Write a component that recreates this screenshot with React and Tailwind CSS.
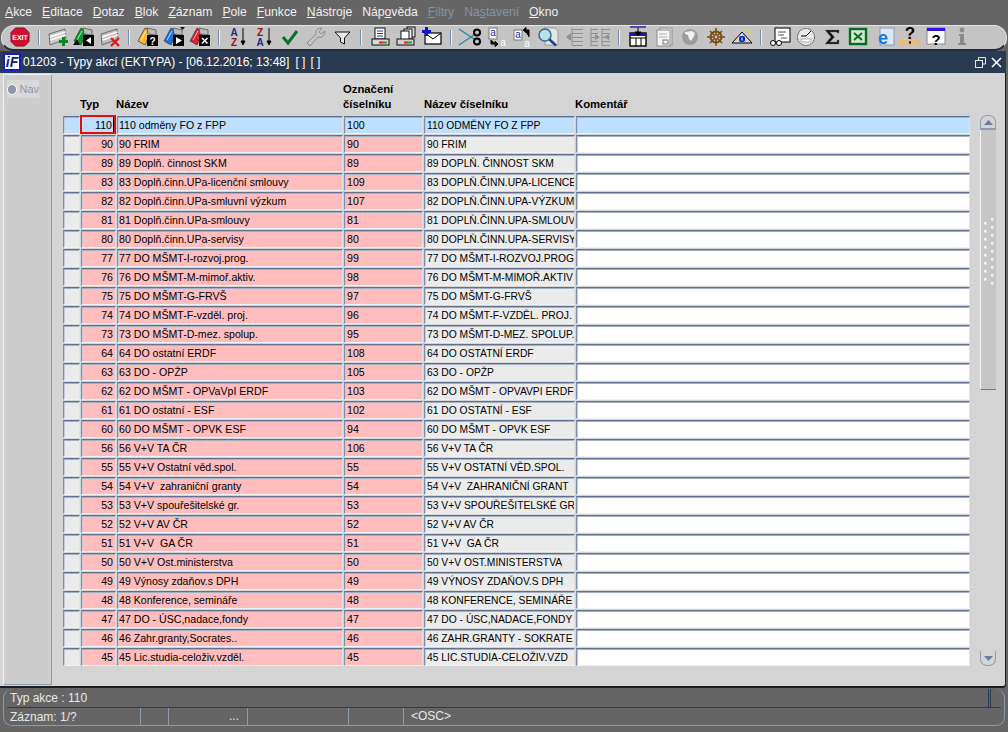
import React from "react";

const rows = [
  ["110","110 odměny FO z FPP","100","110 ODMĚNY FO Z FPP"],
  ["90","90 FRIM","90","90 FRIM"],
  ["89","89 Doplň. činnost SKM","89","89 DOPLŇ. ČINNOST SKM"],
  ["83","83 Doplň.činn.UPa-licenční smlouvy","109","83 DOPLŇ.ČINN.UPA-LICENCE"],
  ["82","82 Doplň.činn.UPa-smluvní výzkum","107","82 DOPLŇ.ČINN.UPA-VÝZKUM"],
  ["81","81 Doplň.činn.UPa-smlouvy","81","81 DOPLŇ.ČINN.UPA-SMLOUV"],
  ["80","80 Doplň.činn.UPa-servisy","80","80 DOPLŇ.ČINN.UPA-SERVISY"],
  ["77","77 DO MŠMT-I-rozvoj.prog.","99","77 DO MŠMT-I-ROZVOJ.PROG"],
  ["76","76 DO MŠMT-M-mimoř.aktiv.","98","76 DO MŠMT-M-MIMOŘ.AKTIV"],
  ["75","75 DO MŠMT-G-FRVŠ","97","75 DO MŠMT-G-FRVŠ"],
  ["74","74 DO MŠMT-F-vzděl. proj.","96","74 DO MŠMT-F-VZDĚL. PROJ."],
  ["73","73 DO MŠMT-D-mez. spolup.","95","73 DO MŠMT-D-MEZ. SPOLUP."],
  ["64","64 DO ostatní ERDF","108","64 DO OSTATNÍ ERDF"],
  ["63","63 DO - OPŽP","105","63 DO - OPŽP"],
  ["62","62 DO MŠMT - OPVaVpI ERDF","103","62 DO MŠMT - OPVAVPI ERDF"],
  ["61","61 DO ostatní - ESF","102","61 DO OSTATNÍ - ESF"],
  ["60","60 DO MŠMT - OPVK ESF","94","60 DO MŠMT - OPVK ESF"],
  ["56","56 V+V TA ČR","106","56 V+V TA ČR"],
  ["55","55 V+V Ostatní věd.spol.","55","55 V+V OSTATNÍ VĚD.SPOL."],
  ["54","54 V+V  zahraniční granty","54","54 V+V  ZAHRANIČNÍ GRANT"],
  ["53","53 V+V spouřešitelské gr.","53","53 V+V SPOUŘEŠITELSKÉ GR"],
  ["52","52 V+V AV ČR","52","52 V+V AV ČR"],
  ["51","51 V+V  GA ČR","51","51 V+V  GA ČR"],
  ["50","50 V+V Ost.ministerstva","50","50 V+V OST.MINISTERSTVA"],
  ["49","49 Výnosy zdaňov.s DPH","49","49 VÝNOSY ZDAŇOV.S DPH"],
  ["48","48 Konference, semináře","48","48 KONFERENCE, SEMINÁŘE"],
  ["47","47 DO - ÚSC,nadace,fondy","47","47 DO - ÚSC,NADACE,FONDY"],
  ["46","46 Zahr.granty,Socrates..","46","46 ZAHR.GRANTY - SOKRATE"],
  ["45","45 Lic.studia-celoživ.vzděl.","45","45 LIC.STUDIA-CELOŽIV.VZD"],
];

const S = ({ children }) => (
  <svg width="26" height="24" viewBox="0 0 26 24" className="block">{children}</svg>
);

const Cards = ({ fill = "#c8c8c8" }) => (
  <g>
    <path d="M4 9 L20 4 L21 14 L5 20 Z" fill={fill} stroke="#555" strokeWidth="0.8" />
    <path d="M5 12 L20.5 7 M5.5 15 L21 10" stroke="#fff" strokeWidth="1.4" />
  </g>
);
const Tilted = ({ c }) => (
  <g>
    <path d="M3 16 L10 3 L16 7 L10 20 Z" fill={c} stroke="#333" strokeWidth="0.7" />
    <path d="M6 15 L11 6" stroke="#fff" strokeWidth="1" opacity="0.7" />
    <path d="M12 3 L21 5 L21 10 L13 9 Z" fill="#bbb" stroke="#444" strokeWidth="0.7" />
  </g>
);
const Badge = ({ children }) => (
  <g>
    <rect x="12" y="10" width="11" height="11" fill="#000" />
    {children}
  </g>
);

const icons = {
  exit: (
    <S>
      <path d="M8.5 3 H17.5 L22 7.5 V16.5 L17.5 21 H8.5 L4 16.5 V7.5 Z" fill="#d01030" stroke="#90081c" />
      <text x="13" y="14.5" textAnchor="middle" fontSize="7" fontWeight="700" fill="#fff" fontFamily="Liberation Sans">EXIT</text>
    </S>
  ),
  add: (
    <S>
      <Cards />
      <path d="M17 12 h3 v3 h3 v3 h-3 v3 h-3 v-3 h-3 v-3 h3 Z" fill="#0a8a1e" />
    </S>
  ),
  green: (
    <S>
      <Tilted c="#0a9a30" />
      <Badge><path d="M20 12 V19 L15 15.5 Z" fill="#fff" /></Badge>
      <path d="M2 20 L6 14 L9 20 Z" fill="#111" />
    </S>
  ),
  del: (
    <S>
      <Cards fill="#bdbdbd" />
      <path d="M14 13 L22 21 M22 13 L14 21" stroke="#e01818" strokeWidth="2.4" />
    </S>
  ),
  yellow: (
    <S>
      <Tilted c="#f6b830" />
      <Badge><text x="17.5" y="19.5" textAnchor="middle" fontSize="10" fontWeight="700" fill="#fff" fontFamily="Liberation Sans">?</text></Badge>
    </S>
  ),
  blue: (
    <S>
      <Tilted c="#2070e0" />
      <Badge><path d="M15 12 L21 15.5 L15 19 Z" fill="#fff" /></Badge>
      <path d="M19 2 h5 l-2.5 3 Z" fill="#111" />
    </S>
  ),
  red: (
    <S>
      <Tilted c="#e02030" />
      <Badge><path d="M15 13 L20.5 18.5 M20.5 13 L15 18.5" stroke="#fff" strokeWidth="1.6" /></Badge>
    </S>
  ),
  az: (
    <S>
      <text x="9" y="11" textAnchor="middle" fontSize="10" fontWeight="700" fill="#1a2a90" fontFamily="Liberation Sans">A</text>
      <text x="9" y="21" textAnchor="middle" fontSize="10" fontWeight="700" fill="#901818" fontFamily="Liberation Sans">Z</text>
      <path d="M18 3 V17 M16 16 L18 20 L20 16 Z" stroke="#000" strokeWidth="1" fill="#000" />
    </S>
  ),
  za: (
    <S>
      <text x="9" y="11" textAnchor="middle" fontSize="10" fontWeight="700" fill="#901818" fontFamily="Liberation Sans">Z</text>
      <text x="9" y="21" textAnchor="middle" fontSize="10" fontWeight="700" fill="#1a2a90" fontFamily="Liberation Sans">A</text>
      <path d="M18 3 V17 M16 16 L18 20 L20 16 Z" stroke="#000" strokeWidth="1" fill="#000" />
    </S>
  ),
  check: (
    <S>
      <path d="M6 12 L11 18 L20 6" fill="none" stroke="#0a7030" strokeWidth="3" />
    </S>
  ),
  wrench: (
    <S>
      <path d="M7 21 L4 18 L13 9 C12 5 15 3 19 3 L16 7 L18 9 L22 6 C22 11 19 13 15 12 Z" fill="#c4c4c4" stroke="#8c8c8c" />
    </S>
  ),
  funnel: (
    <S>
      <path d="M6 7 H21 L15.5 13 V19 L11.5 17 V13 Z" fill="#e8e8e8" stroke="#111" />
    </S>
  ),
  print: (
    <S>
      <rect x="8" y="3" width="10" height="11" fill="#fff" stroke="#111" />
      <path d="M10 6 H16 M10 8.5 H16 M10 11 H16" stroke="#2030b0" />
      <rect x="5" y="14" width="17" height="6" fill="#d8d8d8" stroke="#111" />
      <rect x="12" y="16.5" width="4" height="2" fill="#e02020" />
      <rect x="16" y="16.5" width="4" height="2" fill="#20a020" />
    </S>
  ),
  prints: (
    <S>
      <rect x="14" y="2" width="8" height="10" fill="#ddd" stroke="#111" />
      <rect x="11" y="4" width="8" height="10" fill="#eee" stroke="#111" />
      <rect x="8" y="6" width="8" height="9" fill="#fff" stroke="#111" />
      <rect x="4" y="14" width="17" height="6" fill="#d0d0d0" stroke="#111" />
      <rect x="11" y="16.5" width="4" height="2" fill="#e02020" />
      <rect x="15" y="16.5" width="4" height="2" fill="#20a020" />
    </S>
  ),
  mail: (
    <S>
      <rect x="6" y="8" width="16" height="11" fill="#fff" stroke="#000" strokeWidth="1.2" />
      <path d="M6 8 L14 14 L22 8" fill="none" stroke="#000" />
      <path d="M6 2 h3 v3 h3 v3 h-3 v3 h-3 v-3 h-3 v-3 h3 Z" fill="#0818c8" />
    </S>
  ),
  cut: (
    <S>
      <path d="M2 4 L17 14 M2 20 L17 10" stroke="#2a8aa0" strokeWidth="1.5" fill="none" />
      <circle cx="20" cy="7.5" r="3" fill="none" stroke="#000" strokeWidth="2" />
      <circle cx="20" cy="16.5" r="3" fill="none" stroke="#000" strokeWidth="2" />
    </S>
  ),
  copy: (
    <S>
      <rect x="6" y="3" width="8" height="11" fill="#fff" stroke="#777" />
      <text x="10" y="11" textAnchor="middle" fontSize="10" fill="#1818d0" fontFamily="Liberation Sans">a</text>
      <path d="M8 15 V19 H14 M12 16.5 L15 19 L12 21.5 Z" fill="#000" stroke="#000" />
      <text x="20" y="21" textAnchor="middle" fontSize="10" fill="#fff" fontFamily="Liberation Sans">a</text>
    </S>
  ),
  paste: (
    <S>
      <rect x="5" y="5" width="8" height="10" fill="#fff" stroke="#777" />
      <text x="9" y="13" textAnchor="middle" fontSize="10" fill="#1818d0" fontFamily="Liberation Sans">a</text>
      <path d="M20 12 V5 H15 M17 2.5 L14 5 L17 7.5 Z" fill="#000" stroke="#000" />
      <text x="18" y="22" textAnchor="middle" fontSize="10" fill="#fff" fontFamily="Liberation Sans">a</text>
    </S>
  ),
  search: (
    <S>
      <path d="M9 3 H20 L23 6 V20 H10 Z" fill="#e6e6e6" stroke="#9a9a9a" />
      <circle cx="10" cy="10" r="6" fill="#b8e0f0" stroke="#3a6a80" strokeWidth="1.5" />
      <path d="M14.5 14.5 L21 20.5" stroke="#1840a0" strokeWidth="2.6" />
    </S>
  ),
  lines1: (
    <S>
      <path d="M11 3 V20 M11 4.5 H22 M11 8.5 H22 M11 12.5 H22 M11 16.5 H22 M11 20.5 H22" stroke="#8f8f8f" />
      <path d="M5 12 L10 8 V16 Z" fill="#8f8f8f" />
    </S>
  ),
  lines2: (
    <S>
      <path d="M4 3 V21 M4 4.5 H11 M4 8.5 H11 M4 12.5 H11 M4 16.5 H11 M4 20.5 H11 M15 3 V21 M15 4.5 H23 M15 8.5 H23 M15 12.5 H23 M15 16.5 H23 M15 20.5 H23" stroke="#8f8f8f" />
      <path d="M8 9 L13 12 L8 15 Z M22 9 L17 12 L22 15 Z" fill="#8f8f8f" />
    </S>
  ),
  grid: (
    <S>
      <path d="M5 2 H21" stroke="#1818c0" strokeWidth="1.4" />
      <rect x="5" y="8" width="16" height="13" fill="#fff" stroke="#000" strokeWidth="1.4" />
      <path d="M5 13 H21 M11 13 V21 M16 13 V21" stroke="#000" />
      <rect x="5" y="8" width="16" height="3" fill="#1818c0" />
      <path d="M13 3 V10 M10 7 L13 11 L16 7 Z" stroke="#000" fill="#000" />
    </S>
  ),
  doc: (
    <S>
      <rect x="9" y="3" width="12" height="17" fill="#eaeaea" stroke="#8c8c8c" />
      <rect x="6" y="5" width="13" height="16" fill="#f4f4f4" stroke="#8c8c8c" />
      <path d="M8 9 H16 M8 12 H16" stroke="#b4b4b4" />
      <rect x="12" y="15" width="5" height="4" fill="none" stroke="#777" />
    </S>
  ),
  globe: (
    <S>
      <circle cx="13" cy="12" r="8" fill="#9c9c9c" />
      <path d="M8 7 L15 6 L18 8 L17 11 L14 16 L12 14 L11 10 L8 9 Z" fill="#f0f0f0" />
    </S>
  ),
  wheel: (
    <S>
      <circle cx="13" cy="12" r="5.5" fill="none" stroke="#7a4a10" strokeWidth="2" />
      <path d="M13 3 V21 M4 12 H22 M7 6 L19 18 M19 6 L7 18" stroke="#7a4a10" strokeWidth="1.5" />
      <circle cx="13" cy="12" r="2" fill="#c8c8c8" stroke="#7a4a10" />
    </S>
  ),
  eye: (
    <S>
      <path d="M3 18 L13 7 L23 18 Z" fill="#d8d8d8" stroke="#000" />
      <rect x="10" y="11" width="6" height="6" rx="2" fill="#1020d8" />
      <rect x="12" y="12.5" width="2" height="3" fill="#20d0f0" />
      <path d="M4 7 L6 9 M8 4 L9 7 M13 3 V5 M18 4 L17 7 M22 7 L20 9" stroke="#e8e020" />
    </S>
  ),
  glasses: (
    <S>
      <rect x="8" y="3" width="15" height="14" fill="#fff" stroke="#000" />
      <path d="M11 7 H19 M11 10 H17 M14 13 L20 13" stroke="#555" />
      <circle cx="6" cy="18" r="2.5" fill="#fff" stroke="#000" />
      <circle cx="12" cy="18" r="2.5" fill="#fff" stroke="#000" />
    </S>
  ),
  gauge: (
    <S>
      <circle cx="13" cy="12" r="8.5" fill="#e8e8e8" stroke="#555" strokeDasharray="2 0.6" />
      <path d="M8 11 H13 L18 6" stroke="#000" fill="none" />
      <rect x="8" y="14" width="10" height="3" fill="#fff" stroke="#888" strokeWidth="0.6" />
    </S>
  ),
  sigma: (
    <S>
      <path d="M6 5 H20 V8 H18 V7 H11 L15.5 12 L11 17 H18 V15 H20 V19 H6 L12 12 Z" fill="#111" stroke="#777" strokeWidth="0.5" />
    </S>
  ),
  excel: (
    <S>
      <rect x="5" y="4" width="16" height="15" fill="#d2e8d2" stroke="#0a6a20" strokeWidth="2.4" />
      <path d="M9 8 L17 15 M17 8 L9 15" stroke="#0a6a18" strokeWidth="1.8" />
    </S>
  ),
  ie: (
    <S>
      <rect x="9" y="3" width="14" height="17" fill="#e0e6f4" stroke="#8a9ac0" />
      <text x="12" y="19" textAnchor="middle" fontSize="18" fontWeight="700" fill="#1878d8" fontFamily="Liberation Sans">e</text>
    </S>
  ),
  helpLock: (
    <S>
      <text x="13" y="14" textAnchor="middle" fontSize="17" fontWeight="700" fill="#000" fontFamily="Liberation Sans">?</text>
      <rect x="3" y="14" width="5" height="7" fill="#f0b870" />
      <rect x="10" y="14" width="6" height="7" fill="#f0b870" />
      <rect x="18" y="14" width="5" height="7" fill="#f0b870" />
      <rect x="12" y="16.5" width="2" height="2" fill="#000" />
    </S>
  ),
  helpWin: (
    <S>
      <rect x="4" y="3" width="18" height="16" fill="#fff" stroke="#888" />
      <rect x="4" y="3" width="18" height="3" fill="#3010e0" />
      <text x="13" y="20" textAnchor="middle" fontSize="15" fontWeight="700" fill="#000" fontFamily="Liberation Sans">?</text>
    </S>
  ),
  info: (
    <S>
      <circle cx="13" cy="5" r="2.4" fill="#8a8a8a" />
      <path d="M10 9 H15 V18 H17 V20 H9 V18 H11 V11 H10 Z" fill="#8a8a8a" />
    </S>
  ),
};

const toolbar = [
  "exit","|","add","green","del","|","yellow","blue","red","|","az","za","check","wrench","funnel","|",
  "print","prints","mail","|","cut","copy","paste","search","lines1","lines2","|","grid","doc","globe","wheel","eye","|",
  "glasses","gauge","sigma","excel","ie","helpLock","helpWin","info",
];

const menu = [
  ["", "A", "kce"], ["", "E", "ditace"], ["", "D", "otaz"], ["", "B", "lok"], ["", "Z", "áznam"],
  ["", "P", "ole"], ["", "F", "unkce"], ["", "N", "ástroje"], ["Náp", "o", "věda"],
  ["", "F", "iltry", true], ["Na", "s", "tavení", true], ["", "O", "kno"],
];

const cell = "h-[18px] border-t border-l border-r border-b border-t-[#5f7090] border-l-[#7f8dab] border-r-[#e2e2e2] border-b-[#f2f2f2] shadow-[inset_0_1px_0_#a3afc4,inset_1px_0_0_#c4ccd9] leading-[17px] overflow-hidden whitespace-pre";

function Row({ r, first }) {
  const bg = first ? "bg-[#bfdfff]" : "bg-[#ffbdbd]";
  return (
    <div className="flex gap-px h-[18px] mb-px">
      <div className={`w-[17px] ${cell} ${first ? "bg-[#bfdfff]" : "bg-[#ebebeb]"}`} />
      {first ? (
        <div className="w-[36px] h-[19px] -ml-[1px] -mt-[1px] border-2 border-[#e01010] bg-[#bfdfff] text-right leading-[16px] flex justify-end">
          <span>{r[0]}</span>
          <span className="w-px h-[15px] bg-black ml-px" />
        </div>
      ) : (
        <div className={`w-[35px] pr-[2px] text-right ${cell} ${bg}`}>{r[0]}</div>
      )}
      <div className={`w-[226px] pl-[1px] ${cell} ${bg}`}>{r[1]}</div>
      <div className={`w-[79px] pl-[2px] ${cell} ${bg}`}>{r[2]}</div>
      <div className={`w-[151px] pl-[2px] text-[10.3px] ${cell} ${first ? "bg-[#bfdfff]" : "bg-[#ebebeb]"}`}>{r[3]}</div>
      <div className={`w-[394px] ${cell} ${first ? "bg-[#bfdfff]" : "bg-white"}`} />
    </div>
  );
}

export default function App() {
  return (
    <div className="w-[1008px] h-[732px] overflow-hidden bg-[#656565] text-[10.6px] text-black font-['Liberation_Sans',Arial,sans-serif] flex flex-col">
      <div className="h-[25px] flex items-center gap-[10px] pl-[5px] text-[12.2px] text-[#f0f0f0]">
        {menu.map((m) => (
          <span key={m[1] + m[2]} className={m[3] ? "text-[#8593a3]" : ""}>
            {m[0]}<span className="underline">{m[1]}</span>{m[2]}
          </span>
        ))}
      </div>
      <div className="h-[26px] mx-[1px] bg-[#c4c4c4] rounded-[13px] border border-[#e4e4e4] border-b-2 border-b-[#1f2c42] flex items-center pl-[5px] pb-[1px]">
        {toolbar.map((t, i) =>
          t === "|" ? (
            <div key={i} className="w-[12px] flex justify-center">
              <div className="w-[2px] h-[15px] bg-[#f2f2f2] border-l border-[#7b8aa8]" />
            </div>
          ) : (
            <div key={i} className="w-[26px] flex justify-center">{icons[t]}</div>
          )
        )}
      </div>
      <div className="h-[22px] mr-[2px] bg-[#2a3a52] flex items-center text-white text-[12px] pl-[3px] pr-[4px]">
        <div className="w-[18px] h-[18px] bg-white border-2 border-[#1020c0] flex items-center justify-center mr-[2px]">
          <span className="italic font-bold text-[#101a80] text-[14px] leading-none">iF</span>
        </div>
        <span>01203 - Typy akcí (EKTYPA) - [06.12.2016; 13:48]</span>
        <span className="ml-[6px]">[ ]</span>
        <span className="ml-[5px]">[ ]</span>
        <div className="ml-auto flex items-center gap-[5px]">
          <svg width="11" height="11" viewBox="0 0 11 11" fill="none" stroke="#e8e8e8">
            <path d="M3.5 3 V0.5 H10.5 V7 H8" />
            <rect x="0.5" y="3.5" width="7" height="7" />
          </svg>
          <svg width="11" height="11" viewBox="0 0 11 11" stroke="#fff" strokeWidth="1.5">
            <path d="M1 1 L10 10 M10 1 L1 10" />
          </svg>
        </div>
      </div>
      <div className="h-[615px] mr-[2px] bg-[#d4d4d4] rounded-br-[4px] flex border-b-2 border-b-[#1c1c1c] border-r border-r-[#1c1c1c]">
        <div className="w-[49px] h-[611px] ml-[3px] mt-[1px] border border-[#f0f0f0] border-r-[#8d9ab3] border-b-[#8d9ab3] rounded-tr-[2px] bg-[#cdcdcd] pt-[5px] pl-[3px]">
          <div className="w-[32px] h-[18px] bg-[#d8d8d8] flex items-center gap-[2px] text-[#8a97ad] text-[11px]">
            <span className="w-[11px] h-[11px] rounded-full bg-[#8c97a8] border border-white" />
            <span>Nav</span>
          </div>
        </div>
        <div className="w-[917px] ml-[11px] flex flex-col">
          <div className="h-[43px] font-bold text-[11.3px] flex items-end pb-[4px] leading-[15px]">
            <span className="w-[36px] ml-[17px]">Typ</span>
            <span className="w-[227px]">Název</span>
            <span className="w-[81px]">Označení<br />číselníku</span>
            <span className="w-[151px]">Název číselníku</span>
            <span>Komentář</span>
          </div>
          {rows.map((r, i) => (
            <Row key={r[0]} r={r} first={i === 0} />
          ))}
        </div>
        <div className="w-[16px] mt-[42px] flex flex-col h-[551px]">
          <div className="h-[15px] rounded-t-[7px] border border-[#8d9ab3] border-b-2 flex items-center justify-center bg-[#d4d4d4]">
            <svg width="9" height="5"><path d="M0 5 L4.5 0 L9 5 Z" fill="#6a7b9b" /></svg>
          </div>
          <div className="h-[260px] bg-[#c6c6c6] border-l border-l-[#f4f4f4] border-b border-b-[#6a7b9b] flex items-center justify-center">
            <svg width="12" height="68" viewBox="0 0 12 68" className="mb-[16px]">
              {[0,8,16,24,32,40,48,56,64].map((y) => (
                <g key={y} fill="#f4f4f4">
                  <rect x="8" y={y} width="2.5" height="2.5" />
                  <rect x="1" y={y + 4} width="2.5" height="2.5" />
                </g>
              ))}
            </svg>
          </div>
          <div className="flex-1" />
          <div className="h-[15px] rounded-b-[7px] border border-[#8d9ab3] border-t-0 flex items-center justify-center">
            <svg width="9" height="5"><path d="M0 0 L4.5 5 L9 0 Z" fill="#6a7b9b" /></svg>
          </div>
        </div>
      </div>
      <div className="h-[37px] mx-[3px] mt-[1px] border border-[#8d9ab3] border-t-0 rounded-[9px] text-[#e8e8e8] text-[12px] flex flex-col">
        <div className="h-[19px] mx-[3px] border-b border-b-[#2a3a52] flex items-center pl-[3px] pr-[10px] justify-between">
          <span>Typ akce : 110</span>
          <span className="w-[3px] h-[18px] border-x border-x-[#2a3a52]" />
        </div>
        <div className="h-[17px] ml-[3px] flex items-center">
          <span className="w-[133px] pl-[3px]">Záznam: 1/?</span>
          <span className="w-[28px] h-[17px] border-l border-l-[#8d9ab3]" />
          <span className="w-[79px] h-[17px] border-l border-l-[#8d9ab3] text-right pr-[8px] leading-[17px]">...</span>
          <span className="w-[101px] h-[17px] border-l border-l-[#8d9ab3]" />
          <span className="w-[55px] h-[17px] border-l border-l-[#8d9ab3]" />
          <span className="h-[17px] border-l border-l-[#8d9ab3] pl-[7px] leading-[17px]">&lt;OSC&gt;</span>
        </div>
      </div>
    </div>
  );
}
